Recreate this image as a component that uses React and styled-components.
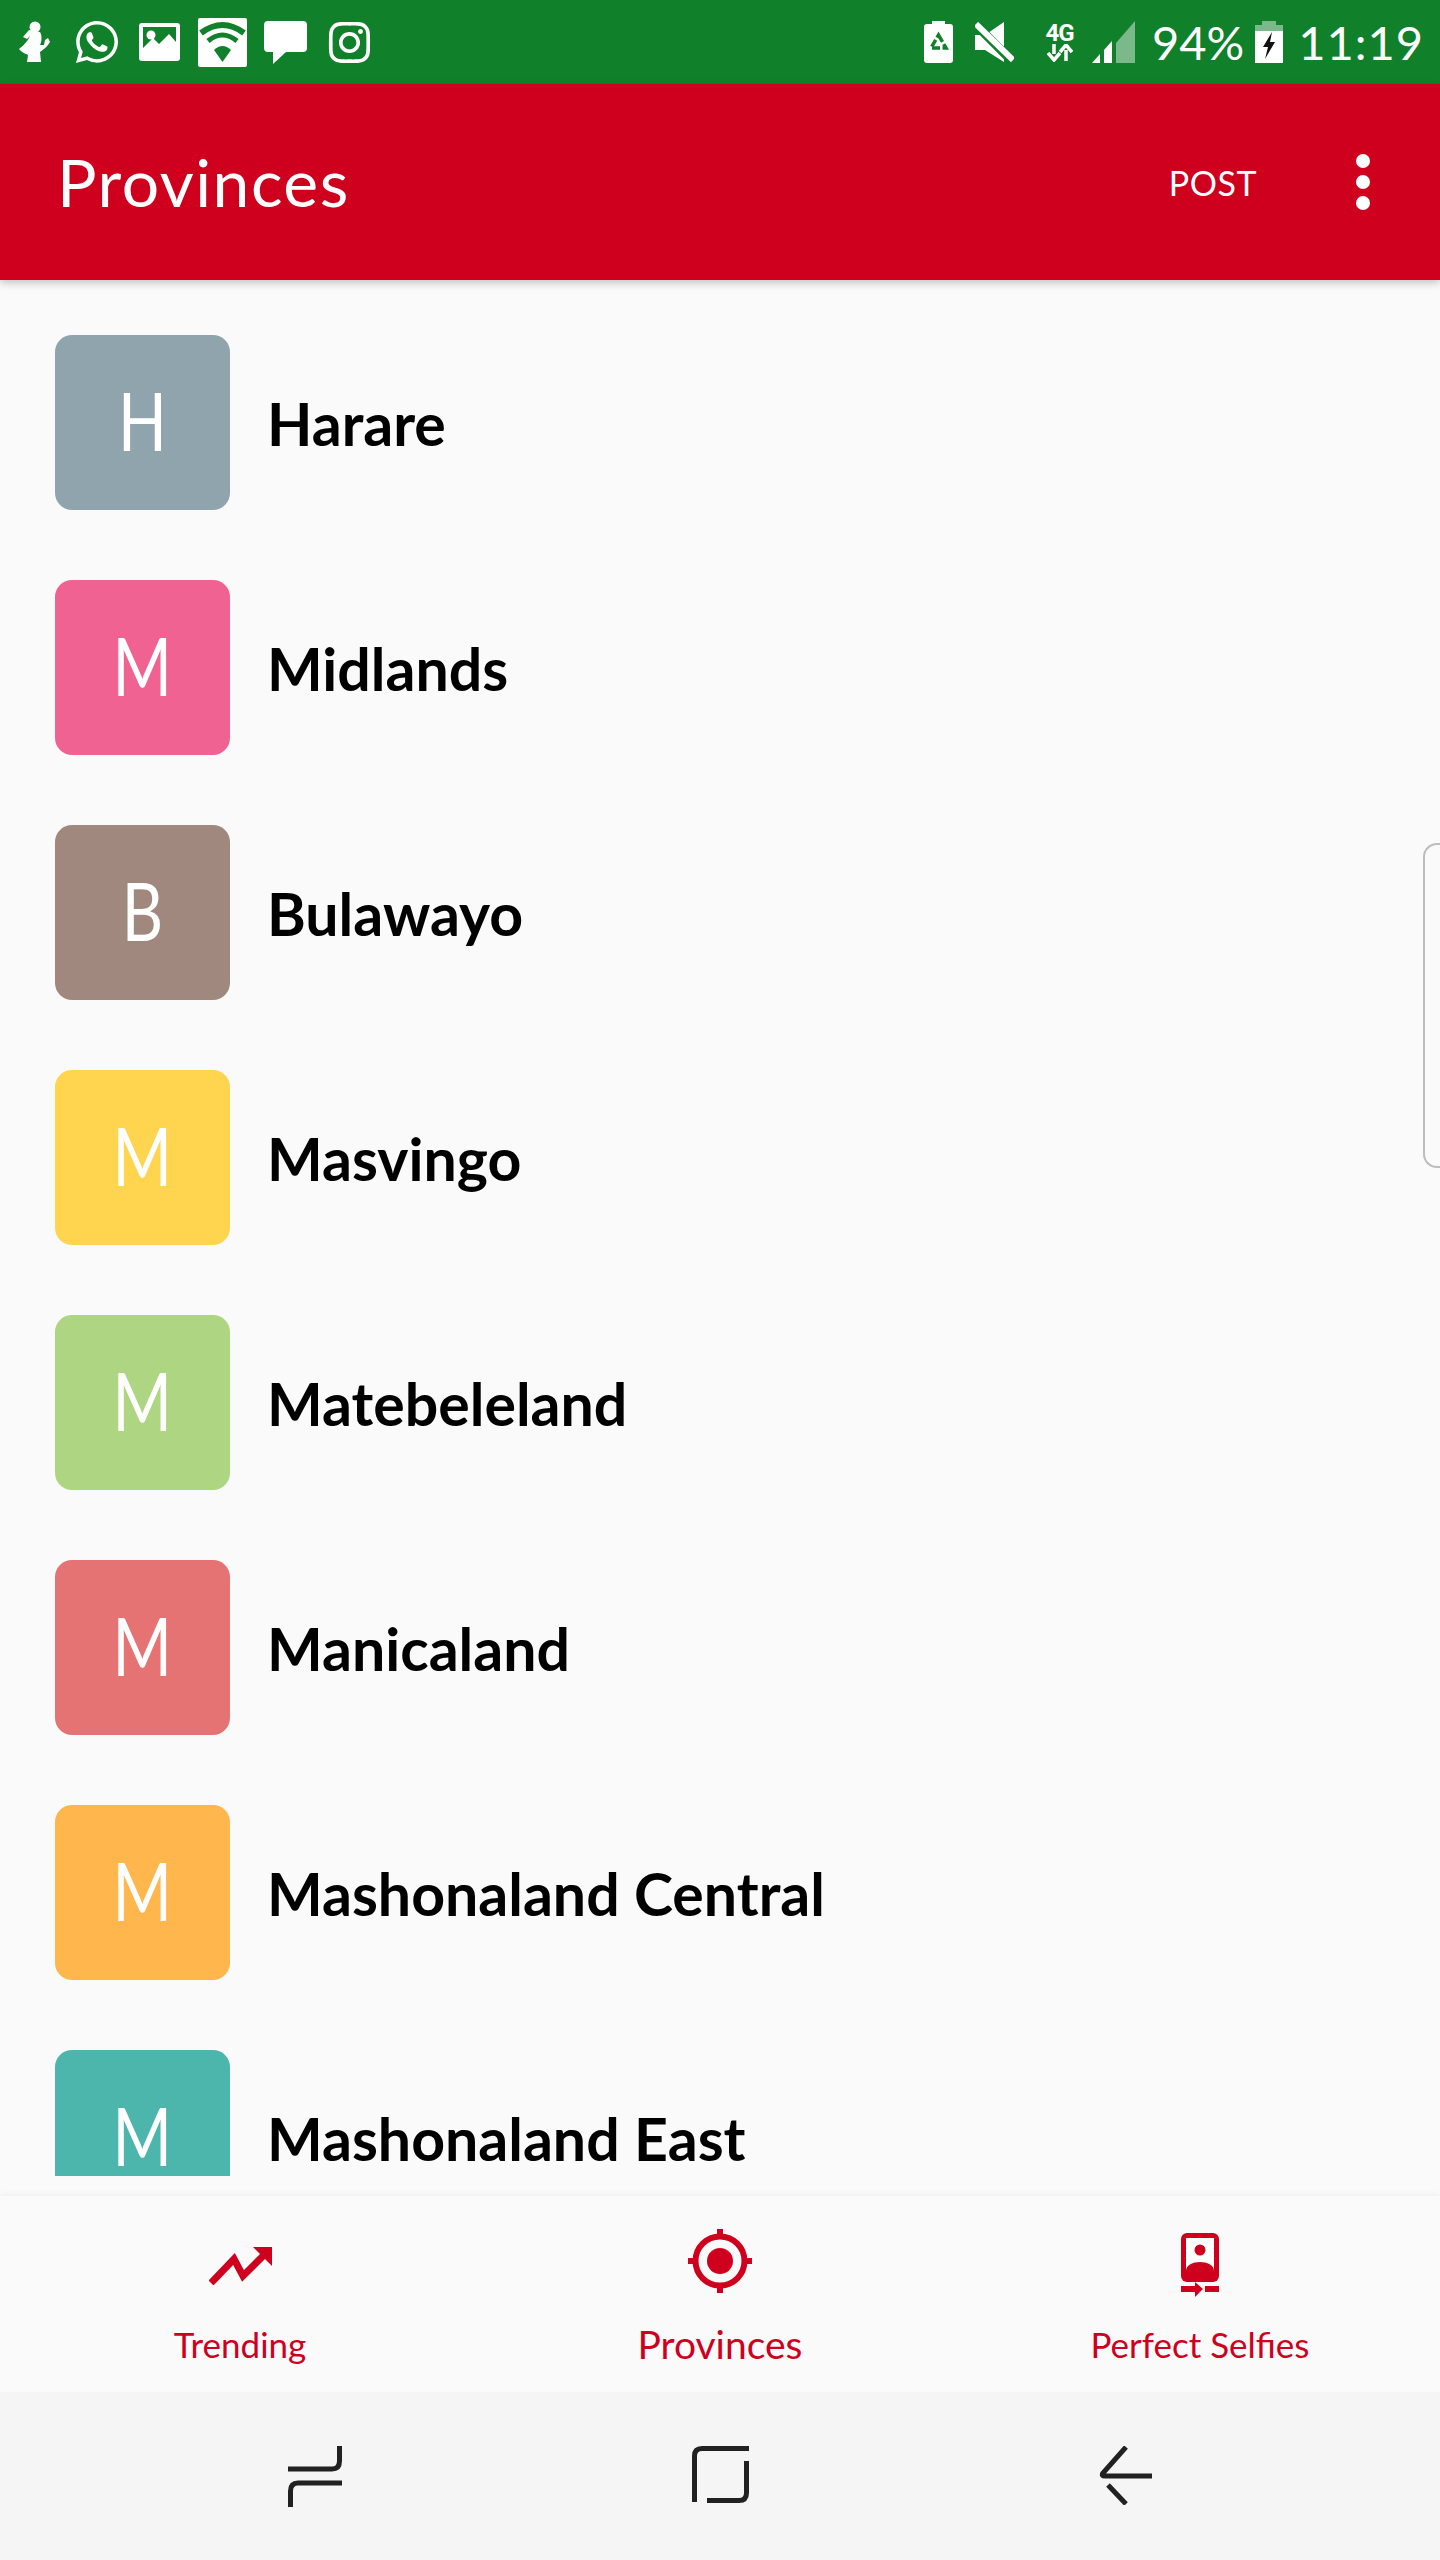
import React from "react";
import styled, { createGlobalStyle } from "styled-components";
import { FaWhatsapp, FaInstagram } from "react-icons/fa";

const GREEN = "#10802A";
const RED = "#CE001D";
const FONT = `"Lato", "Open Sans", sans-serif`;

const Global = createGlobalStyle`
  html, body { margin: 0; padding: 0; background: #fafafa; }
  * { box-sizing: border-box; }
`;

const Screen = styled.div`
  position: relative;
  width: 1440px;
  height: 2560px;
  display: flex;
  flex-direction: column;
  overflow: hidden;
  background: #fafafa;
  font-family: ${FONT};
`;

const StatusBar = styled.div`
  height: 84px;
  flex: none;
  background: ${GREEN};
  display: flex;
  align-items: center;
  justify-content: space-between;
  padding: 0 16px 0 18px;
  color: #fff;
`;

const StatusGroup = styled.div`
  display: flex;
  align-items: center;
`;

const StatusIcon = styled.svg`
  display: block;
  flex: none;
  margin-left: ${(p) => p.$ml || 0}px;
`;

const Brand = styled.span`
  display: flex;
  flex: none;
  font-size: ${(p) => p.$size}px;
  margin-left: ${(p) => p.$ml || 0}px;
  color: #fff;
`;

const NetBadge = styled.div`
  flex: none;
  width: 33px;
  margin-left: 29px;
  display: flex;
  flex-direction: column;
  align-items: center;
  font-family: "Roboto", sans-serif;
  font-weight: 700;
  font-size: 24px;
  line-height: 22px;
  letter-spacing: -1px;
`;

const StatusText = styled.span`
  font-size: ${(p) => p.$size}px;
  line-height: 1;
  margin-left: ${(p) => p.$ml}px;
  letter-spacing: ${(p) => p.$ls || 0}px;
`;

const AppBar = styled.header`
  position: relative;
  z-index: 2;
  flex: none;
  height: 196px;
  background: ${RED};
  display: flex;
  align-items: center;
  padding: 0 70px 0 57px;
  box-shadow: 0 3px 8px rgba(0, 0, 0, 0.22);
  color: #fff;
`;

const Title = styled.h1`
  margin: 0;
  flex: 1;
  font-size: 66px;
  font-weight: 400;
  letter-spacing: 1.5px;
  line-height: 1;
`;

const PostButton = styled.span`
  font-size: 34px;
  letter-spacing: 0.5px;
  margin-right: 99px;
`;

const MoreDots = styled.div`
  display: flex;
  flex-direction: column;
  gap: 7px;
`;

const Dot = styled.span`
  width: 14px;
  height: 14px;
  border-radius: 50%;
  background: #fff;
`;

const List = styled.main`
  flex: 1;
  min-height: 0;
  overflow: hidden;
  margin-bottom: 20px;
  padding: 55px 0 0 55px;
  display: flex;
  flex-direction: column;
  gap: 70px;
`;

const Row = styled.div`
  flex: none;
  height: 175px;
  display: flex;
  align-items: center;
  gap: 37px;
`;

const Avatar = styled.div`
  width: 175px;
  height: 175px;
  flex: none;
  border-radius: 17px;
  background: ${(p) => p.$color};
  color: #fff;
  display: flex;
  align-items: center;
  justify-content: center;
  font-size: 82px;
  font-weight: 400;
`;

const Initial = styled.span`
  display: inline-block;
  margin-bottom: 8px;
  transform: scaleX(0.78);
`;

const Name = styled.span`
  font-size: 59px;
  font-weight: 700;
  color: #000;
  position: relative;
  top: 1px;
`;

const BottomNav = styled.nav`
  flex: none;
  height: 196px;
  background: #fafafa;
  display: grid;
  grid-template-columns: repeat(3, 1fr);
  box-shadow: 0 -2px 6px rgba(0, 0, 0, 0.04);
`;

const NavItem = styled.div`
  display: flex;
  flex-direction: column;
  align-items: center;
  color: ${RED};
`;

const NavIconSlot = styled.div`
  height: 102px;
  padding-bottom: ${(p) => p.$lift || 0}px;
  display: flex;
  align-items: flex-end;
  justify-content: center;
`;

const NavLabel = styled.span`
  margin-top: ${(p) => (p.$active ? 27 : 29)}px;
  font-size: ${(p) => (p.$active ? 39 : 35)}px;
  line-height: 1;
`;

const SoftKeys = styled.div`
  flex: none;
  height: 168px;
  background: #f5f5f5;
  display: grid;
  grid-template-columns: repeat(3, 1fr);
  padding-top: 54px;
  align-items: start;
`;

const SoftKey = styled.div`
  display: flex;
  justify-content: center;
  transform: translateX(${(p) => p.$dx || 0}px);
`;

const EdgeHandle = styled.div`
  position: absolute;
  right: 0;
  top: 843px;
  width: 17px;
  height: 325px;
  border: 2px solid #bdbdbd;
  border-right: none;
  border-radius: 14px 0 0 14px;
`;

const provinces = [
  ["Harare", "#90A4AE"],
  ["Midlands", "#F06292"],
  ["Bulawayo", "#A1887F"],
  ["Masvingo", "#FFD54F"],
  ["Matebeleland", "#AED581"],
  ["Manicaland", "#E57373"],
  ["Mashonaland Central", "#FFB74D"],
  ["Mashonaland East", "#4DB6AC"],
];

const Ic = ({ w, h, ml, children }) => (
  <StatusIcon width={w} height={h} viewBox={`0 0 ${w} ${h}`} $ml={ml}>
    {children}
  </StatusIcon>
);

export default function App() {
  return (
    <Screen>
      <Global />
      <StatusBar>
        <StatusGroup>
          <Ic w={32} h={42}>
            <circle cx="17" cy="6" r="5.5" fill="#fff" />
            <path
              d="M11 9 L5 16 L9 18 L12 15 C10 20 5 25 1 28 C3 31 8 33 10 34 L9 41 H23 L22 31 C26 28 30 25 32 21 L30 17 L27 19 L26 24 L22 24 C24 20 24 14 22 11 Z"
              fill="#fff"
            />
          </Ic>
          <Brand $size={48} $ml={23}>
            <FaWhatsapp />
          </Brand>
          <Ic w={41} h={38} ml={18}>
            <rect width="41" height="38" rx="3" fill="#fff" />
            <path d="M4 4 H37 V19 L30 11 L20 21 L14 15 L4 25 Z" fill={GREEN} />
            <circle cx="12" cy="12" r="4.5" fill="#fff" />
          </Ic>
          <Ic w={49} h={49} ml={18}>
            <rect width="49" height="49" rx="2" fill="#fff" />
            <g fill="none" stroke={GREEN}>
              <path d="M3 15 Q24.5 -1 46 15" strokeWidth="6" />
              <path d="M10 23 Q24.5 11 39 23" strokeWidth="5" />
            </g>
            <path d="M16 32 Q24.5 24 33 32 L24.5 44 Z" fill={GREEN} />
          </Ic>
          <Ic w={43} h={43} ml={17}>
            <path
              d="M4 0 H39 Q43 0 43 4 V27 Q43 31 39 31 H22 L9 43 V31 H4 Q0 31 0 27 V4 Q0 0 4 0 Z"
              fill="#fff"
            />
          </Ic>
          <Brand $size={47} $ml={19}>
            <FaInstagram />
          </Brand>
        </StatusGroup>
        <StatusGroup>
          <Ic w={29} h={42}>
            <path
              d="M8 0 H21 V3 H26 Q29 3 29 6 V39 Q29 42 26 42 H3 Q0 42 0 39 V6 Q0 3 3 3 H8 Z"
              fill="#fff"
            />
            <path
              d="M14.5 14 L22 27 H7 Z"
              fill="none"
              stroke={GREEN}
              strokeWidth="3.5"
              strokeDasharray="8 2.5"
            />
          </Ic>
          <Ic w={39} h={40} ml={22}>
            <path d="M0 13 H10 L29 0 V40 L10 28 H0 Z" fill="#fff" />
            <path d="M1 3 L37 39" stroke={GREEN} strokeWidth="9" />
            <path d="M1 2 L38 38" stroke="#fff" strokeWidth="6" />
          </Ic>
          <NetBadge>
            4G
            <svg width="26" height="18" viewBox="0 0 26 18">
              <path d="M7 0 V10 M1 9 L7 16 L13 9" fill="none" stroke="#fff" strokeWidth="3.5" />
              <path d="M19 17 V6 M13 8 L19 1 L25 8" fill="none" stroke="#fff" strokeWidth="3.5" />
            </svg>
          </NetBadge>
          <Ic w={43} h={42} ml={16}>
            <path d="M24 22 L43 0 V42 H24 Z" fill="#fff" opacity="0.45" />
            <path d="M0 42 L8 33 V42 Z M12 29 L20 20 V42 H12 Z" fill="#fff" />
          </Ic>
          <StatusText $size={47} $ml={17}>
            94%
          </StatusText>
          <Ic w={28} h={42} ml={11}>
            <path d="M7 0 H21 V4 H28 V10 H0 V4 H7 Z" fill="#fff" opacity="0.45" />
            <rect y="10" width="28" height="32" fill="#fff" />
            <path d="M17 11 L8 26 H13 L10 38 L20 21 H15 Z" fill="#111" />
          </Ic>
          <StatusText $size={47} $ml={15} $ls={1}>
            11:19
          </StatusText>
        </StatusGroup>
      </StatusBar>

      <AppBar>
        <Title>Provinces</Title>
        <PostButton>POST</PostButton>
        <MoreDots>
          <Dot />
          <Dot />
          <Dot />
        </MoreDots>
      </AppBar>

      <List>
        {provinces.map(([name, color]) => (
          <Row key={name}>
            <Avatar $color={color}>
              <Initial>{name[0]}</Initial>
            </Avatar>
            <Name>{name}</Name>
          </Row>
        ))}
      </List>

      <BottomNav>
        <NavItem>
          <NavIconSlot $lift={13}>
            <svg width="63" height="38" viewBox="0 0 63 38" fill={RED}>
              <path d="M2 36 L25 12 L34 29 L56 7" fill="none" stroke={RED} strokeWidth="7" />
              <path d="M44 0 H63 V19 Z" />
            </svg>
          </NavIconSlot>
          <NavLabel>Trending</NavLabel>
        </NavItem>
        <NavItem>
          <NavIconSlot $lift={5}>
            <svg width="64" height="64" viewBox="0 0 64 64">
              <circle cx="32" cy="32" r="24.5" fill="none" stroke={RED} strokeWidth="6" />
              <circle cx="32" cy="32" r="13" fill={RED} />
              <path d="M32 0 V10 M32 54 V64 M0 32 H10 M54 32 H64" stroke={RED} strokeWidth="6" />
            </svg>
          </NavIconSlot>
          <NavLabel $active>Provinces</NavLabel>
        </NavItem>
        <NavItem>
          <NavIconSlot>
            <svg width="38" height="65" viewBox="0 0 38 65">
              <rect width="38" height="49" rx="6" fill={RED} />
              <rect x="5" y="5" width="28" height="33" fill="#fff" />
              <circle cx="19" cy="17" r="5.5" fill={RED} />
              <path d="M5 38 C5 26 33 26 33 38 Z" fill={RED} />
              <path d="M0 56 H16 M24 56 H38" stroke={RED} strokeWidth="6" />
              <path d="M14 49 L22 56 L14 64 Z" fill={RED} />
            </svg>
          </NavIconSlot>
          <NavLabel>Perfect Selfies</NavLabel>
        </NavItem>
      </BottomNav>

      <SoftKeys>
        <SoftKey $dx={75}>
          <svg width="54" height="61" viewBox="0 0 54 61" fill="none" stroke="#212121" strokeWidth="5">
            <path d="M0 23 H44 Q51.5 23 51.5 15 V0" />
            <path d="M54 37 H10 Q2.5 37 2.5 45 V61" />
          </svg>
        </SoftKey>
        <SoftKey>
          <svg width="57" height="57" viewBox="0 0 57 57" fill="none" stroke="#212121" strokeWidth="5">
            <path d="M2.5 56 V10 Q2.5 2.5 10 2.5 H57" />
            <path d="M15 54.5 H47 Q54.5 54.5 54.5 47 V15" />
          </svg>
        </SoftKey>
        <SoftKey $dx={-75}>
          <svg width="53" height="59" viewBox="0 0 53 59" fill="none" stroke="#212121" strokeWidth="5">
            <path d="M27 1 L4 27 Q2 30 6 30 H53" />
            <path d="M9 39 L27 58" />
          </svg>
        </SoftKey>
      </SoftKeys>

      <EdgeHandle />
    </Screen>
  );
}
